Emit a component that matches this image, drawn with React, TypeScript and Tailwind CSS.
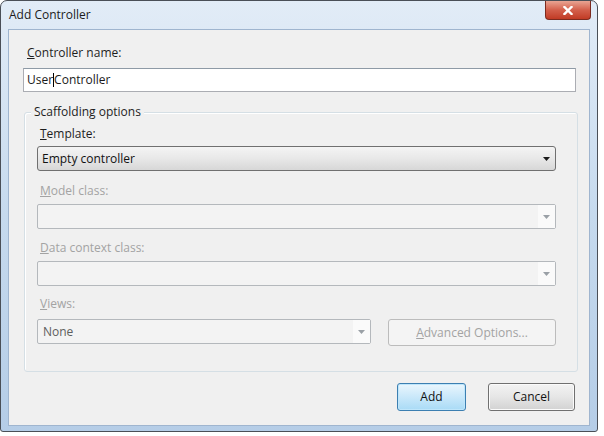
import type { ReactNode } from 'react';

const font = { fontFamily: '"Open Sans", "Noto Sans", sans-serif' };

function Arrow({ muted }: { muted?: boolean }) {
  return (
    <svg width="7" height="4" viewBox="0 0 7 4" className="shrink-0">
      <path d="M0 0h7L3.5 4z" fill={muted ? '#9aa0a6' : '#1a1a1a'} />
    </svg>
  );
}

function Label({ children, muted }: { children: ReactNode; muted?: boolean }) {
  return (
    <div className={`h-[16px] leading-[16px] text-[12px] ${muted ? 'text-[#a3a3a3]' : 'text-[#1e1e1e]'}`}>
      {children}
    </div>
  );
}

function DisabledCombo({ text, width }: { text?: string; width: string }) {
  return (
    <div className={`${width} h-[25px] flex items-center border border-[#b4b8bc] rounded-[2px] bg-[#f3f3f3]`}>
      <span className="flex-1 pl-[5px] text-[12px] text-[#5e5e5e]">{text}</span>
      <div className="w-[17px] h-full flex items-center justify-center bg-[#fafafa]">
        <Arrow muted />
      </div>
    </div>
  );
}

export default function App() {
  return (
    <div className="w-[604px] h-[436px] bg-white" style={font}>
      <div className="w-[598px] h-[432px] rounded-t-[7px] rounded-b-[3px] border border-[#4a4f57] bg-gradient-to-b from-[#e2ecf7] via-[#c6daee] to-[#b5cde7] flex flex-col">
        {/* Title bar */}
        <div className="h-[28px] flex justify-between items-start shrink-0">
          <div className="pl-[8px] pt-[5px] text-[12px] text-[#1b1b1b]">Add Controller</div>
          <div className="mr-[6px] w-[46px] h-[19px] rounded-b-[4px] border border-t-0 border-[#7c2b1f] bg-gradient-to-b from-[#e8a493] via-[#d35f4b] to-[#c13a24] flex items-center justify-center">
            <svg width="10" height="9" viewBox="0 0 10 9">
              <path d="M1.5 1l7 7M8.5 1l-7 7" stroke="#ffffff" strokeWidth="2.4" strokeLinecap="square" />
            </svg>
          </div>
        </div>

        {/* Client area */}
        <div className="mx-[7px] mb-[5px] flex-1 border border-[#9fb5cf] bg-[#f0f0f0] flex flex-col pl-[14px] pr-[13px]">
          <div className="mt-[15px] ml-[4px]">
            <Label>
              <span className="underline">C</span>ontroller name:
            </Label>
          </div>
          <div className="mt-[7px] h-[24px] border border-[#abadb3] border-t-[#8e9aa6] bg-white flex items-center pl-[3px] text-[12px] text-[#1a1a1a]">
            User<span className="inline-block w-px h-[14px] bg-black" />Controller
          </div>

          {/* Scaffolding options */}
          <div className="mt-[20px] relative border border-[#d5dfe5] rounded-[3px] shadow-[inset_1px_1px_0_#ffffff] h-[260px] ml-[1px] mr-[-2px] pl-[12px] pr-[21px]">
            <div className="absolute left-[6px] -top-[9px] px-[3px] bg-[#f0f0f0] text-[12px] leading-[16px] text-[#1e1e1e]">
              Scaffolding options
            </div>
            <div className="mt-[13px] ml-[3px]">
              <Label>
                <span className="underline">T</span>emplate:
              </Label>
            </div>
            <div className="mt-[4px] h-[25px] border border-[#707070] rounded-[3px] bg-gradient-to-b from-[#f4f4f4] via-[#e8e8e8] to-[#d7d7d7] flex items-center">
              <span className="flex-1 pl-[4px] text-[12px] text-[#111]">Empty controller</span>
              <div className="w-[17px] flex justify-center"><Arrow /></div>
            </div>

            <div className="mt-[12px] ml-[3px]">
              <Label muted>
                <span className="underline">M</span>odel class:
              </Label>
            </div>
            <div className="mt-[5px]">
              <DisabledCombo width="w-full" />
            </div>

            <div className="mt-[11px] ml-[3px]">
              <Label muted>
                <span className="underline">D</span>ata context class:
              </Label>
            </div>
            <div className="mt-[5px]">
              <DisabledCombo width="w-full" />
            </div>

            <div className="mt-[10px] ml-[3px]">
              <Label muted>
                <span className="underline">V</span>iews:
              </Label>
            </div>
            <div className="mt-[7px] flex justify-between">
              <DisabledCombo text="None" width="w-[334px]" />
              <div className="w-[168px] h-[27px] border border-[#bcbcbc] rounded-[3px] bg-[#f4f4f4] flex items-center justify-center text-[12px] text-[#a3a3a3]">
                <span><span className="underline">A</span>dvanced Options...</span>
              </div>
            </div>
          </div>

          {/* Buttons */}
          <div className="mt-[11px] flex justify-end gap-[22px] mr-[1px]">
            <div className="w-[69px] h-[28px] rounded-[3px] border border-[#3c7fb1] bg-gradient-to-b from-[#eaf6fd] via-[#c9e8fa] to-[#a9dbf6] shadow-[inset_0_0_0_1px_#bfe6fb] flex items-center justify-center text-[12px] text-[#111]">
              Add
            </div>
            <div className="w-[87px] h-[28px] rounded-[3px] border border-[#707070] bg-gradient-to-b from-[#f3f3f3] via-[#e6e6e6] to-[#d2d2d2] shadow-[inset_0_0_0_1px_#fbfbfb] flex items-center justify-center text-[12px] text-[#111]">
              Cancel
            </div>
          </div>
        </div>
      </div>
    </div>
  );
}
